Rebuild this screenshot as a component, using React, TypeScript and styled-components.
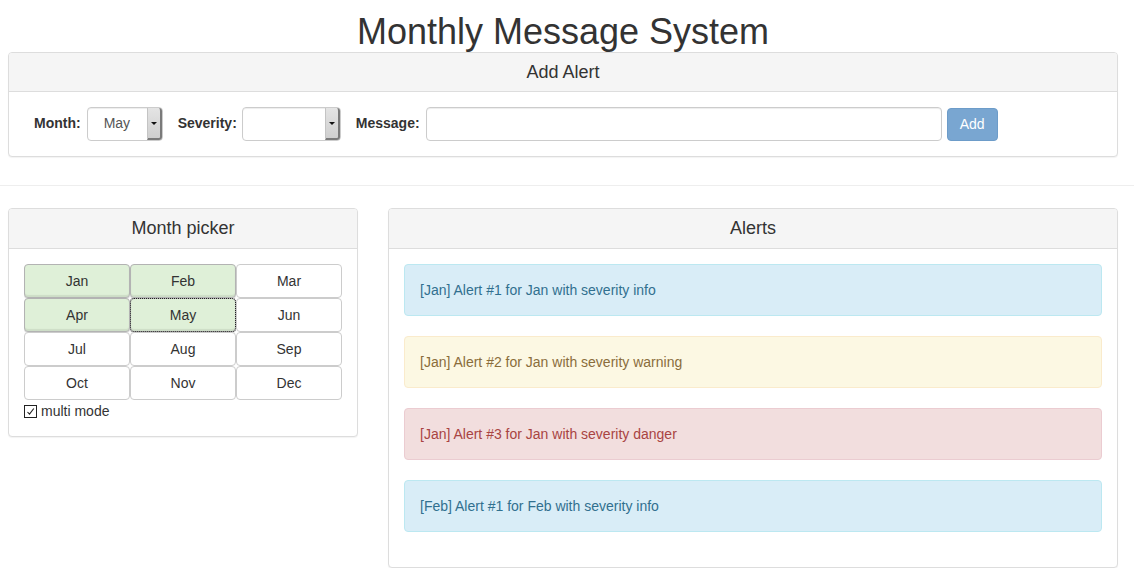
import React from "react";
import styled, { createGlobalStyle } from "styled-components";

const Global = createGlobalStyle`
  html, body { margin: 0; padding: 0; background: #fff; }
  body {
    font-family: "Liberation Sans", Arial, Helvetica, sans-serif;
    font-size: 14px;
    line-height: 1.42857;
    color: #333;
  }
  * { box-sizing: border-box; }
`;

const Page = styled.div`
  width: 1134px;
`;

const Title = styled.h1`
  margin: 12px 0 0;
  padding-right: 8px;
  font-size: 36px;
  font-weight: 400;
  line-height: 1.1;
  text-align: center;
  color: #333;
`;

const Panel = styled.div`
  background: #fff;
  border: 1px solid #ddd;
  border-radius: 4px;
  box-shadow: 0 1px 1px rgba(0, 0, 0, 0.05);
  overflow: hidden;
`;

const TopPanel = styled(Panel)`
  margin: 0 16px 0 8px;
`;

const PanelHeading = styled.div`
  background: #f5f5f5;
  border-bottom: 1px solid #ddd;
  padding: 10px 15px 9px;
  text-align: center;
  font-size: 18px;
  line-height: 1.1;
  color: #333;
`;

const PanelBody = styled.div`
  padding: 15px;
`;

const FormRow = styled.div`
  display: flex;
  align-items: center;
  padding-left: 10px;
  height: 34px;
`;

const Label = styled.label<{ $gap?: number; $after?: number }>`
  font-weight: 700;
  font-size: 14px;
  margin-left: ${(p) => p.$gap ?? 0}px;
  margin-right: ${(p) => p.$after ?? 5}px;
`;

const FakeSelect = styled.div<{ $w: number }>`
  position: relative;
  width: ${(p) => p.$w}px;
  height: 34px;
  border: 1px solid #ccc;
  border-radius: 4px;
  background: #fff;
  box-shadow: inset 0 1px 1px rgba(0, 0, 0, 0.075);
  display: flex;
  align-items: center;
  padding-left: 16px;
  color: #555;
  font-size: 14px;
`;

const SelectArrow = styled.div`
  position: absolute;
  right: 0;
  top: 0;
  bottom: 0;
  width: 15px;
  background: linear-gradient(#e4e4e4, #cfcfcf);
  border-left: 1px solid #c4c4c4;
  border-right: 2px solid #7a7a7a;
  border-bottom: 2px solid #7a7a7a;
  border-radius: 0 3px 3px 0;
  display: flex;
  align-items: center;
  justify-content: center;
  &::after {
    content: "";
    width: 0;
    height: 0;
    border-left: 3px solid transparent;
    border-right: 3px solid transparent;
    border-top: 3px solid #111;
  }
`;

const TextInput = styled.div`
  width: 516px;
  height: 34px;
  border: 1px solid #ccc;
  border-radius: 4px;
  box-shadow: inset 0 1px 1px rgba(0, 0, 0, 0.075);
  background: #fff;
`;

const AddButton = styled.button`
  margin-left: 5px;
  width: 51px;
  height: 33px;
  border: 1px solid #6d9cc9;
  border-radius: 4px;
  background: #79a6d1;
  color: #fff;
  font-family: inherit;
  font-size: 14px;
  padding: 0;
`;

const Rule = styled.hr`
  margin: 28px 0 22px;
  border: 0;
  border-top: 1px solid #eee;
  height: 0;
`;

const Row = styled.div`
  display: grid;
  grid-template-columns: 350px 730px;
  column-gap: 30px;
  padding-left: 8px;
  align-items: start;
`;

const MonthGrid = styled.div`
  display: grid;
  grid-template-columns: repeat(3, 106px);
  grid-auto-rows: 34px;
`;

const MonthButton = styled.div<{ $selected?: boolean; $focus?: boolean }>`
  display: flex;
  align-items: center;
  justify-content: center;
  padding-top: 2px;
  font-size: 14px;
  color: #333;
  border: 1px solid ${(p) => (p.$selected ? "#b3b3b3" : "#ccc")};
  border-radius: 4px;
  background: ${(p) => (p.$selected ? "#dff0d8" : "#fff")};
  box-shadow: ${(p) =>
    p.$selected ? "inset 0 -2px 1px rgba(0,0,0,0.08), 0 1px 0 rgba(0,0,0,0.12)" : "none"};
  outline: ${(p) => (p.$focus ? "1px dotted #222" : "none")};
  outline-offset: -1px;
`;

const CheckRow = styled.div`
  display: flex;
  align-items: center;
  height: 21px;
  padding-top: 2px;
  font-size: 14px;
`;

const CheckBox = styled.span`
  width: 13px;
  height: 13px;
  border: 1px solid #222;
  background: #fff;
  margin-right: 4px;
  display: flex;
  align-items: center;
  justify-content: center;
`;

const Alert = styled.div<{ $kind: "info" | "warning" | "danger" }>`
  padding: 15px;
  margin-bottom: 20px;
  border: 1px solid;
  border-radius: 4px;
  font-size: 14px;
  line-height: 20px;
  ${(p) =>
    p.$kind === "info"
      ? "background:#d9edf7;border-color:#bce8f1;color:#31708f;"
      : p.$kind === "warning"
      ? "background:#fcf8e3;border-color:#faebcc;color:#8a6d3b;"
      : "background:#f2dede;border-color:#ebccd1;color:#a94442;"}
`;

const AlertList = styled.div``;

const months = ["Jan", "Feb", "Mar", "Apr", "May", "Jun", "Jul", "Aug", "Sep", "Oct", "Nov", "Dec"];
const selected = new Set(["Jan", "Feb", "Apr", "May"]);

const alerts: { kind: "info" | "warning" | "danger"; text: string }[] = [
  { kind: "info", text: "[Jan] Alert #1 for Jan with severity info" },
  { kind: "warning", text: "[Jan] Alert #2 for Jan with severity warning" },
  { kind: "danger", text: "[Jan] Alert #3 for Jan with severity danger" },
  { kind: "info", text: "[Feb] Alert #1 for Feb with severity info" },
];

export default function App() {
  return (
    <Page>
      <Global />
      <Title>Monthly Message System</Title>
      <TopPanel>
        <PanelHeading>Add Alert</PanelHeading>
        <PanelBody>
          <FormRow>
            <Label $after={6}>Month:</Label>
            <FakeSelect $w={76}>
              May
              <SelectArrow />
            </FakeSelect>
            <Label $gap={15} $after={5}>Severity:</Label>
            <FakeSelect $w={99}>
              <SelectArrow />
            </FakeSelect>
            <Label $gap={15} $after={6}>Message:</Label>
            <TextInput />
            <AddButton>Add</AddButton>
          </FormRow>
        </PanelBody>
      </TopPanel>
      <Rule />
      <Row>
        <Panel>
          <PanelHeading>Month picker</PanelHeading>
          <PanelBody>
            <MonthGrid>
              {months.map((m) => (
                <MonthButton key={m} $selected={selected.has(m)} $focus={m === "May"}>
                  {m}
                </MonthButton>
              ))}
            </MonthGrid>
            <CheckRow>
              <CheckBox>
                <svg width="9" height="9" viewBox="0 0 9 9">
                  <path d="M1.5 5 L3.5 7.2 L7.8 1.5" stroke="#222" strokeWidth="1.1" fill="none" />
                </svg>
              </CheckBox>
              multi mode
            </CheckRow>
          </PanelBody>
        </Panel>
        <Panel>
          <PanelHeading>Alerts</PanelHeading>
          <PanelBody>
            <AlertList>
              {alerts.map((a, i) => (
                <Alert key={i} $kind={a.kind}>
                  {a.text}
                </Alert>
              ))}
            </AlertList>
          </PanelBody>
        </Panel>
      </Row>
    </Page>
  );
}
